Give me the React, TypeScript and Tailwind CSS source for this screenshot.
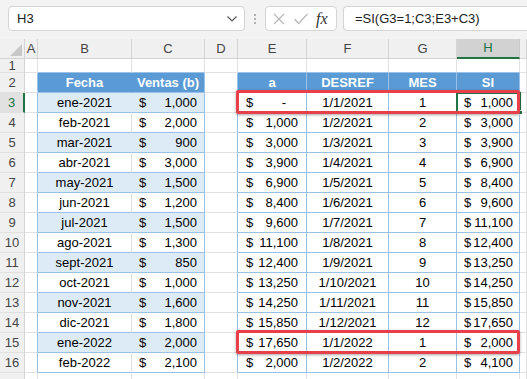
import React from "react";

const COLS = ["A", "B", "C", "D", "E", "F", "G", "H", ""];

const left = [
  ["ene-2021", "1,000"],
  ["feb-2021", "2,000"],
  ["mar-2021", "900"],
  ["abr-2021", "3,000"],
  ["may-2021", "1,500"],
  ["jun-2021", "1,200"],
  ["jul-2021", "1,500"],
  ["ago-2021", "1,300"],
  ["sept-2021", "850"],
  ["oct-2021", "1,000"],
  ["nov-2021", "1,600"],
  ["dic-2021", "1,800"],
  ["ene-2022", "2,000"],
  ["feb-2022", "2,100"],
];

const right = [
  ["-", "1/1/2021", "1", "1,000"],
  ["1,000", "1/2/2021", "2", "3,000"],
  ["3,000", "1/3/2021", "3", "3,900"],
  ["3,900", "1/4/2021", "4", "6,900"],
  ["6,900", "1/5/2021", "5", "8,400"],
  ["8,400", "1/6/2021", "6", "9,600"],
  ["9,600", "1/7/2021", "7", "11,100"],
  ["11,100", "1/8/2021", "8", "12,400"],
  ["12,400", "1/9/2021", "9", "13,250"],
  ["13,250", "1/10/2021", "10", "14,250"],
  ["14,250", "1/11/2021", "11", "15,850"],
  ["15,850", "1/12/2021", "12", "17,650"],
  ["17,650", "1/1/2022", "1", "2,000"],
  ["2,000", "1/2/2022", "2", "4,100"],
];

const grid = "border-r border-b border-[#e1e1e1]";
const blue = "border-r border-b border-[#9bc2e6]";

function Money({ v, pl, pr }: { v: string; pl: string; pr: string }) {
  return (
    <div className={`flex items-center justify-between h-full ${pl} ${pr}`}>
      <span>$</span>
      <span className={v === "-" ? "pr-[12px]" : ""}>{v}</span>
    </div>
  );
}

function RowHeader({ n, selected }: { n?: number; selected?: boolean }) {
  return (
    <div
      className={`flex items-center justify-center border-b border-[#e1e1e1] text-[13px] ${
        selected
          ? "bg-[#e1e1e1] text-[#217346] border-r-2 border-r-[#217346]"
          : "bg-[#f0f0f0] text-[#444] border-r border-r-[#d4d4d4]"
      }`}
    >
      {n}
    </div>
  );
}

export default function App() {
  const rows: React.ReactNode[] = [];

  // row 1
  rows.push(
    <React.Fragment key="r1">
      <RowHeader n={1} />
      <div className={grid} />
      <div className="border-r border-[#e1e1e1] border-b border-b-[#9bc2e6]" />
      <div className="border-r border-[#e1e1e1] border-b border-b-[#9bc2e6]" />
      <div className={grid} />
      <div className="border-r border-[#e1e1e1] border-b border-b-[#9bc2e6]" />
      <div className="border-r border-[#e1e1e1] border-b border-b-[#9bc2e6]" />
      <div className="border-r border-[#e1e1e1] border-b border-b-[#9bc2e6]" />
      <div className="border-r border-[#e1e1e1] border-b border-b-[#9bc2e6]" />
      <div className={grid} />
    </React.Fragment>
  );

  // row 2 headers
  const hdr = "bg-[#5b9bd5] text-white font-bold flex items-center justify-center border-b border-[#9bc2e6]";
  rows.push(
    <React.Fragment key="r2">
      <RowHeader n={2} />
      <div className="border-b border-[#e1e1e1] border-r border-r-[#9bc2e6]" />
      <div className={`${hdr} border-r border-r-[#5b9bd5]`}>Fecha</div>
      <div className={`${hdr} border-r border-r-[#9bc2e6]`}>Ventas (b)</div>
      <div className="border-b border-[#e1e1e1] border-r border-r-[#9bc2e6]" />
      <div className={`${hdr} border-r border-r-[#9bc2e6]`}>a</div>
      <div className={`${hdr} border-r border-r-[#9bc2e6]`}>DESREF</div>
      <div className={`${hdr} border-r border-r-[#9bc2e6]`}>MES</div>
      <div className={`${hdr} border-r border-r-[#9bc2e6]`}>SI</div>
      <div className={grid} />
    </React.Fragment>
  );

  left.forEach(([date, sale], i) => {
    const n = i + 3;
    const band = i % 2 === 0;
    const bg = band ? "bg-[#ddebf7]" : "bg-white";
    const [e, f, g, h] = right[i];
    rows.push(
      <React.Fragment key={`r${n}`}>
        <RowHeader n={n} selected={n === 3} />
        <div className="border-b border-[#e1e1e1] border-r border-r-[#9bc2e6]" />
        <div
          className={`${bg} border-b border-[#9bc2e6] border-r ${
            band ? "border-r-[#ddebf7]" : "border-r-[#e1e1e1]"
          } flex items-center justify-center`}
        >
          {date}
        </div>
        <div className={`${bg} ${blue}`}>
          <Money v={sale} pl="pl-[7px]" pr="pr-[7px]" />
        </div>
        <div className="border-b border-[#e1e1e1] border-r border-r-[#9bc2e6]" />
        <div className={blue}>
          <Money v={e} pl="pl-[8px]" pr="pr-[8px]" />
        </div>
        <div className={`${blue} flex items-center justify-center`}>{f}</div>
        <div className={`${blue} flex items-center justify-center`}>{g}</div>
        <div className={blue}>
          <Money v={h} pl="pl-[7px]" pr="pr-[6px]" />
        </div>
        <div className={grid} />
      </React.Fragment>
    );
  });

  // row 17, only its top edge shows
  rows.push(
    <React.Fragment key="r17">
      <RowHeader />
      {Array.from({ length: 9 }).map((_, k) => (
        <div key={k} className={grid} />
      ))}
    </React.Fragment>
  );

  return (
    <div
      className="relative w-[527px] h-[379px] overflow-hidden bg-white text-[13px] text-black"
      style={{ fontFamily: '"Liberation Sans", Arial, sans-serif' }}
    >
      {/* formula bar */}
      <div className="h-[39px] bg-[#f3f3f3] flex items-start pt-[6px] pl-[8px]">
        <div className="w-[237px] h-[25px] bg-white border border-[#d4d4d4] rounded-[4px] flex items-center justify-between pl-[8px] pr-[6px] text-[13px] text-[#222]">
          <span>H3</span>
          <svg width="12" height="8" viewBox="0 0 12 8">
            <path d="M1.5 1.5 L6 6 L10.5 1.5" fill="none" stroke="#555" strokeWidth="1.2" />
          </svg>
        </div>
        <div className="w-[20px] h-[25px] flex flex-col items-center justify-center gap-[2px]">
          <span className="w-[2px] h-[2px] bg-[#9a9a9a] rounded-full" />
          <span className="w-[2px] h-[2px] bg-[#9a9a9a] rounded-full" />
          <span className="w-[2px] h-[2px] bg-[#9a9a9a] rounded-full" />
        </div>
        <div className="w-[72px] h-[25px] bg-white border border-[#d4d4d4] rounded-[4px] flex items-center pl-[6px] gap-[7px]">
          <svg width="14" height="14" viewBox="0 0 14 14">
            <path d="M2 2 L12 12 M12 2 L2 12" stroke="#b8b8b8" strokeWidth="1.2" fill="none" />
          </svg>
          <svg width="16" height="14" viewBox="0 0 16 14">
            <path d="M1.5 7 L5.5 11.5 L14.5 2" stroke="#b8b8b8" strokeWidth="1.2" fill="none" />
          </svg>
          <span
            className="italic text-[16px] text-[#333] leading-none"
            style={{ fontFamily: '"Liberation Serif", "Times New Roman", serif' }}
          >
            fx
          </span>
        </div>
        <div className="ml-[6px] flex-1 h-[25px] bg-white border border-[#d4d4d4] border-r-0 rounded-l-[4px] flex items-center pl-[11px] text-[13px] text-[#222]">
          =SI(G3=1;C3;E3+C3)
        </div>
      </div>

      {/* sheet grid */}
      <div className="grid grid-cols-[25px_13px_94px_73px_33px_69px_82px_68px_63px_1fr] grid-rows-[20px_14px_repeat(16,20px)]">
        <div className="bg-[#f0f0f0] border-r border-b border-[#d4d4d4] relative">
          <svg className="absolute right-[2px] bottom-[2px]" width="12" height="12" viewBox="0 0 12 12">
            <path d="M12 0 L12 12 L0 12 Z" fill="#c8c8c8" />
          </svg>
        </div>
        {COLS.map((c) => (
          <div
            key={c || "I"}
            className={`flex items-center justify-center text-[13px] ${
              c === "H"
                ? "bg-[#d2d2d2] text-[#217346] border-b-2 border-b-[#217346] border-r border-r-[#c8c8c8]"
                : "bg-[#f0f0f0] text-[#444] border-r border-b border-[#d4d4d4]"
            }`}
          >
            {c}
          </div>
        ))}
        {rows}
      </div>

      {/* selected cell H3 */}
      <div className="absolute left-[456px] top-[92px] w-[65px] h-[22px] border-2 border-[#217346]" />
      <div className="absolute left-[518px] top-[110px] w-[5px] h-[5px] bg-[#217346] border border-white" />

      {/* red highlight boxes */}
      <div className="absolute left-[236px] top-[90px] w-[284px] h-[24px] border-[3px] border-[#e8404a] rounded-[2px] shadow-[0_1px_3px_rgba(0,0,0,0.35)]" />
      <div className="absolute left-[236px] top-[330px] w-[284px] h-[24px] border-[3px] border-[#e8404a] rounded-[2px] shadow-[0_1px_3px_rgba(0,0,0,0.35)]" />
    </div>
  );
}
